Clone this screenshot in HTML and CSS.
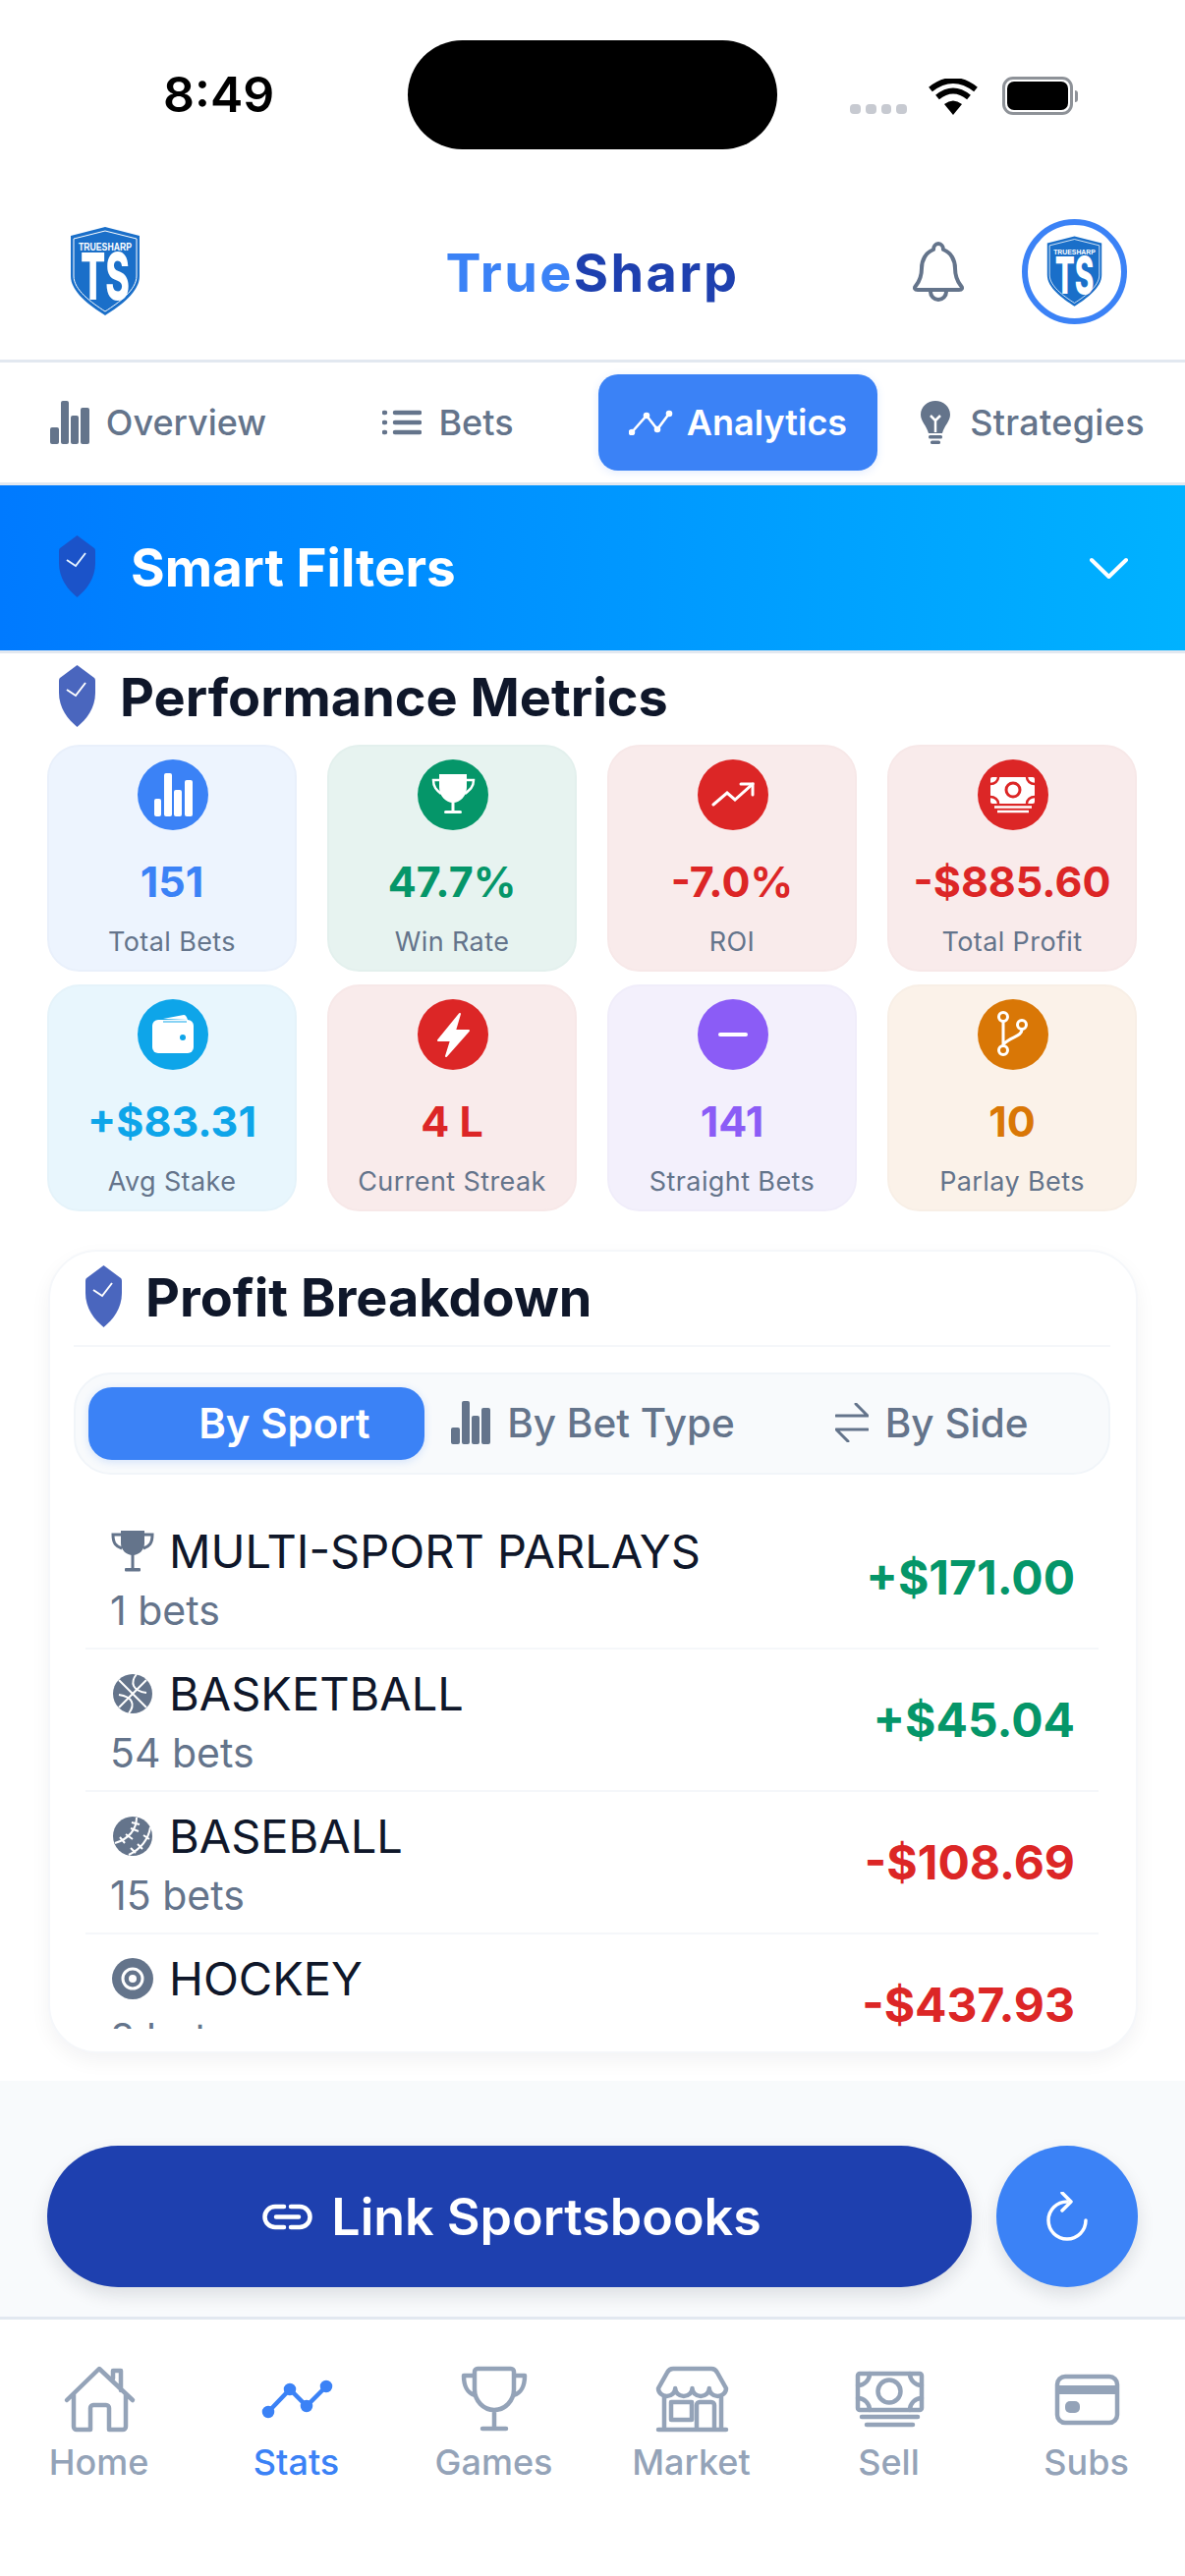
FILE: index.html
```html
<!DOCTYPE html>
<html lang="en">
<head>
<meta charset="utf-8">
<title>TrueSharp Analytics</title>
<link rel="stylesheet" href="styles.css">
</head>
<body>
<svg class="defs" width="0" height="0" aria-hidden="true">
  <symbol id="shield" viewBox="0 0 37 63">
    <path d="M18.5 0 L36 13 C37 14 37 15 37 17 V28 C37 44 28 55 18.5 63 C9 55 0 44 0 28 V17 C0 15 0 14 1 13 Z"/>
    <path d="M8 25 L17 31 L27 18" fill="none" stroke="#fff" stroke-width="2"/>
  </symbol>
  <symbol id="bars" viewBox="0 0 40 44">
    <rect x="0" y="27" width="9" height="17" rx="2"/><rect x="11" y="0" width="8" height="44" rx="2"/><rect x="21" y="15" width="8" height="29" rx="2"/><rect x="31" y="7" width="9" height="37" rx="2"/>
  </symbol>
</svg>

<header class="status">
  <span class="time">8:49</span>
  <div class="island"></div>
  <div class="status-right">
    <div class="signal"><i></i><i></i><i></i><i></i></div>
    <svg class="wifi" width="50" height="37" viewBox="0 0 50 37"><path d="M25 37 L16 26 Q25 19 34 26 Z"/><path d="M9 19 Q25 6 41 19" fill="none" stroke="#000" stroke-width="6"/><path d="M2 11 Q25 -7 48 11" fill="none" stroke="#000" stroke-width="6"/></svg>
    <div class="battery"><div class="battery-fill"></div></div>
  </div>
</header>

<section class="topbar">
  <svg class="logo logo-svg" width="72" height="90" viewBox="0 0 72 90">
    <path d="M36 0 L71 9 V50 C71 66 52 80 36 90 C20 80 1 66 1 50 V9 Z" fill="#1a6fc9"/>
    <path d="M36 4 L68 12 V50 C68 64 50 77 36 86 C22 77 4 64 4 50 V12 Z" fill="none" stroke="#fff" stroke-width="1"/>
    <text x="36" y="24" text-anchor="middle" class="logo-small" textLength="54" lengthAdjust="spacingAndGlyphs">TRUESHARP</text>
    <text x="36" y="74" text-anchor="middle" class="logo-big" textLength="50" lengthAdjust="spacingAndGlyphs">TS</text>
  </svg>
  <div class="brand"><span class="brand-a">True</span><span class="brand-b">Sharp</span></div>
  <div class="top-actions">
    <svg width="54" height="62" viewBox="0 0 54 62" fill="none" stroke="#64748b" stroke-width="4" stroke-linejoin="round"><path d="M27 3 C30 3 32 6 32 9 C40 12 44 20 44 28 C44 36 46 41 50 46 C52 48 51 50 48 50 H6 C3 50 2 48 4 46 C8 41 10 36 10 28 C10 20 14 12 22 9 C22 6 24 3 27 3 Z"/><path d="M19 50 V52 a8 8 0 0 0 16 0 V50"/></svg>
    <div class="avatar">
      <svg class="logo-svg" width="57" height="72" viewBox="0 0 72 90">
        <path d="M36 0 L71 9 V50 C71 66 52 80 36 90 C20 80 1 66 1 50 V9 Z" fill="#1a6fc9"/>
        <path d="M36 4 L68 12 V50 C68 64 50 77 36 86 C22 77 4 64 4 50 V12 Z" fill="none" stroke="#fff" stroke-width="1"/>
        <text x="36" y="24" text-anchor="middle" class="logo-small" textLength="54" lengthAdjust="spacingAndGlyphs">TRUESHARP</text>
        <text x="36" y="74" text-anchor="middle" class="logo-big" textLength="50" lengthAdjust="spacingAndGlyphs">TS</text>
      </svg>
    </div>
  </div>
</section>

<nav class="tabs">
  <div class="tab"><svg class="fill-slate" width="40" height="44"><use href="#bars"/></svg><span>Overview</span></div>
  <div class="tab"><svg width="40" height="26" viewBox="0 0 40 26" fill="none" stroke="#64748b" stroke-width="4.5" stroke-linecap="round"><path d="M13 3 H38 M13 13 H38 M13 23 H38 M2 3 H3 M2 13 H3 M2 23 H3"/></svg><span>Bets</span></div>
  <div class="tab tab-active"><svg width="45" height="26" viewBox="0 0 45 26" fill="#fff" stroke="#fff" stroke-width="2.6"><path d="M3 23 L18 6 L29 20 L41 4" fill="none"/><circle cx="3" cy="23" r="2"/><circle cx="18" cy="6" r="2"/><circle cx="29" cy="20" r="2"/><circle cx="41" cy="4" r="2"/></svg><span>Analytics</span></div>
  <div class="tab tab-last"><svg width="30" height="44" viewBox="0 0 30 44" fill="#64748b"><path d="M15 0 C23 0 30 6 30 14 C30 21 24 25 22 33 H8 C6 25 0 21 0 14 C0 6 7 0 15 0 Z"/><path d="M15 32 V20 L10 15 M15 20 L20 15" fill="none" stroke="#fff" stroke-width="2.5"/><rect x="8" y="35" width="14" height="3.5" rx="1.5"/><rect x="10" y="40.5" width="10" height="3.5" rx="1.5"/></svg><span>Strategies</span></div>
</nav>

<section class="banner">
  <svg class="shield shield-banner" width="37" height="63"><use href="#shield"/></svg>
  <h2 class="banner-title">Smart Filters</h2>
  <svg class="chevron" width="39" height="23" viewBox="0 0 39 23" fill="none" stroke="#fff" stroke-width="4" stroke-linecap="round" stroke-linejoin="round"><path d="M2 3 L19.5 20 L37 3"/></svg>
</section>

<main class="main">
  <div class="section-head">
    <svg class="shield shield-plain" width="37" height="63"><use href="#shield"/></svg>
    <h2 class="heading">Performance Metrics</h2>
  </div>

  <div class="metrics">
    <div class="metric m-blue">
      <div class="metric-icon"><svg width="72" height="72" viewBox="0 0 72 72" fill="#fff"><rect x="17" y="40" width="7" height="18" rx="2"/><rect x="27" y="14" width="8" height="44" rx="2"/><rect x="37" y="31" width="8" height="27" rx="2"/><rect x="48" y="21" width="8" height="37" rx="2"/></svg></div>
      <div class="metric-value">151</div><div class="metric-label">Total Bets</div>
    </div>
    <div class="metric m-green">
      <div class="metric-icon"><svg width="72" height="72" viewBox="0 0 72 72" fill="#fff"><path d="M22 15 H50 V28 a14 16 0 0 1 -28 0 Z"/><path d="M22 21 H16 C16 28 19 31 24 35 M50 21 H57 C57 28 53 31 48 35" fill="none" stroke="#fff" stroke-width="2.5"/><rect x="34.500" y="40" width="3" height="13"/><rect x="27" y="52" width="18" height="3" rx="1.500"/></svg></div>
      <div class="metric-value">47.7%</div><div class="metric-label">Win Rate</div>
    </div>
    <div class="metric m-red">
      <div class="metric-icon"><svg width="72" height="72" viewBox="0 0 72 72" fill="none" stroke="#fff" stroke-width="3" stroke-linecap="round"><path d="M16 46 L30 34 L38 41 L56 25"/><path d="M44 25 H56 V36"/></svg></div>
      <div class="metric-value">-7.0%</div><div class="metric-label">ROI</div>
    </div>
    <div class="metric m-red">
      <div class="metric-icon"><svg width="72" height="72" viewBox="0 0 72 72"><rect x="13" y="18" width="45" height="27" rx="2" fill="#fff"/><circle cx="36" cy="31" r="7" fill="#fff" stroke="#dc2626" stroke-width="3"/><path d="M13 25 a8 7 0 0 0 8 -7 M58 25 a8 7 0 0 1 -8 -7 M13 38 a8 7 0 0 1 8 7 M58 38 a8 7 0 0 0 -8 7" fill="none" stroke="#dc2626" stroke-width="2.500"/><path d="M17 48.500 H55 M20 53 H52" stroke="#fff" stroke-width="2.500"/></svg></div>
      <div class="metric-value">-$885.60</div><div class="metric-label">Total Profit</div>
    </div>
    <div class="metric m-sky">
      <div class="metric-icon"><svg width="72" height="72" viewBox="0 0 72 72" fill="#fff"><rect x="15" y="21" width="42" height="34" rx="6"/><path d="M26 20 L47 16 C49 16 50 18 51 21 Z"/><path d="M26 23 H50" stroke="#0ea5e9" stroke-width="1"/><circle cx="46" cy="39" r="3" fill="#0ea5e9"/></svg></div>
      <div class="metric-value">+$83.31</div><div class="metric-label">Avg Stake</div>
    </div>
    <div class="metric m-red">
      <div class="metric-icon"><svg width="72" height="72" viewBox="0 0 72 72" fill="#fff" stroke="#fff" stroke-width="2" stroke-linejoin="round"><path d="M43 15 L21 42 H34 L29 58 L52 32 H38 Z"/></svg></div>
      <div class="metric-value">4 L</div><div class="metric-label">Current Streak</div>
    </div>
    <div class="metric m-purple">
      <div class="metric-icon"><svg width="72" height="72" viewBox="0 0 72 72"><rect x="21" y="34" width="30" height="4" rx="2" fill="#fff"/></svg></div>
      <div class="metric-value">141</div><div class="metric-label">Straight Bets</div>
    </div>
    <div class="metric m-orange">
      <div class="metric-icon"><svg width="72" height="72" viewBox="0 0 72 72" fill="none" stroke="#fff" stroke-width="3"><circle cx="26" cy="18" r="4.500"/><circle cx="45" cy="26" r="4.500"/><circle cx="26" cy="52" r="4.500"/><path d="M26 23 V47 M45 31 C45 38 34 38 26 46"/></svg></div>
      <div class="metric-value">10</div><div class="metric-label">Parlay Bets</div>
    </div>
  </div>

  <section class="breakdown">
    <div class="section-head breakdown-head">
      <svg class="shield shield-plain" width="37" height="63"><use href="#shield"/></svg>
      <h2 class="heading">Profit Breakdown</h2>
    </div>
    <div class="segments">
      <div class="segment segment-active"><span class="seg-spacer"></span><span>By Sport</span></div>
      <div class="segment segment-mid"><svg class="fill-slate" width="40" height="44"><use href="#bars"/></svg><span>By Bet Type</span></div>
      <div class="segment segment-end"><svg width="34" height="40" viewBox="0 0 34 40" fill="none" stroke="#64748b" stroke-width="3" stroke-linecap="round" stroke-linejoin="round"><path d="M1 13 H33 L21 1 M33 27 H1 L13 39"/></svg><span>By Side</span></div>
    </div>
    <div class="rows">
      <div class="row">
        <div class="row-info">
          <div class="row-title"><svg width="44" height="42" viewBox="0 0 44 42" fill="#64748b"><path d="M10 0 H34 V13 C34 20 28 25 22 25 C16 25 10 20 10 13 Z"/><path d="M10 4 H2 C2 13 5 16 11 18 M34 4 H42 C42 13 39 16 33 18" fill="none" stroke="#64748b" stroke-width="3"/><rect x="20.500" y="24" width="3" height="15"/><rect x="14" y="38" width="16" height="3.500" rx="1"/></svg><span>MULTI-SPORT PARLAYS</span></div>
          <div class="row-count">1 bets</div>
        </div>
        <div class="row-value pos">+$171.00</div>
      </div>
      <div class="row">
        <div class="row-info">
          <div class="row-title"><svg width="44" height="42" viewBox="0 0 44 42"><circle cx="22" cy="21" r="20" fill="#64748b"/><path d="M8 7 L36 35 M36 7 L8 35 M26 1 C19 10 22 18 36 20 M18 41 C25 32 22 24 8 22" fill="none" stroke="#fff" stroke-width="2"/></svg><span>BASKETBALL</span></div>
          <div class="row-count">54 bets</div>
        </div>
        <div class="row-value pos">+$45.04</div>
      </div>
      <div class="row">
        <div class="row-info">
          <div class="row-title"><svg width="44" height="42" viewBox="0 0 44 42"><circle cx="22" cy="21" r="20" fill="#64748b"/><path d="M26 2 C26 14 18 24 4 28 M40 12 C38 24 30 34 18 40 M21 7 L29 9 M20 13 L28 16 M15 19 L22 24 M9 22 L14 28 M33 20 L39 24 M27 29 L32 34 M20 33 L25 38" fill="none" stroke="#fff" stroke-width="2"/></svg><span>BASEBALL</span></div>
          <div class="row-count">15 bets</div>
        </div>
        <div class="row-value neg">-$108.69</div>
      </div>
      <div class="row">
        <div class="row-info">
          <div class="row-title"><svg width="44" height="42" viewBox="0 0 44 42"><circle cx="22" cy="21" r="21" fill="#64748b"/><circle cx="22" cy="21" r="10" fill="none" stroke="#fff" stroke-width="3"/><circle cx="22" cy="21" r="4" fill="#fff"/></svg><span>HOCKEY</span></div>
          <div class="row-count">8 bets</div>
        </div>
        <div class="row-value neg">-$437.93</div>
      </div>
    </div>
  </section>
</main>

<section class="actions">
  <button class="link-btn"><svg width="53" height="27" viewBox="0 0 53 27" fill="none" stroke="#fff" stroke-width="4.500" stroke-linecap="round"><path d="M23 3 H14 a10.500 10.500 0 0 0 0 21 H23 M30 3 H39 a10.500 10.500 0 0 1 0 21 H30 M15 13.500 H38"/></svg><span>Link Sportsbooks</span></button>
  <button class="refresh-btn"><svg width="42" height="50" viewBox="0 0 42 50" fill="none" stroke="#fff" stroke-width="3.500" stroke-linecap="round" stroke-linejoin="round"><path d="M21 10 a19 19 0 1 0 19 19"/><path d="M16 1 L25 10 L16 19"/></svg></button>
</section>

<nav class="bottom">
  <div class="bottom-item">
    <svg width="80" height="72" viewBox="0 0 80 72" class="nav-icon"><path d="M7 36 L40 4 L74 36 M14 30 V63 a3 3 0 0 0 3 3 H31 V44 a3 3 0 0 1 3 -3 H47 a3 3 0 0 1 3 3 V66 H64 a3 3 0 0 0 3 -3 V30 M54 14 V6 H62 V26"/></svg>
    <span>Home</span>
  </div>
  <div class="bottom-item bottom-active">
    <svg width="80" height="72" viewBox="0 0 80 72" fill="#3b82f6" stroke="#3b82f6" stroke-width="4.500"><path d="M11 48 L33 25 L50 42 L70 22" fill="none"/><circle cx="11" cy="48" r="4"/><circle cx="33" cy="25" r="4"/><circle cx="50" cy="42" r="4"/><circle cx="70" cy="22" r="4"/></svg>
    <span>Stats</span>
  </div>
  <div class="bottom-item">
    <svg width="80" height="72" viewBox="0 0 80 72" class="nav-icon"><path d="M23 4 H57 a3 3 0 0 1 3 3 V25 a20 21 0 0 1 -40 0 V7 a3 3 0 0 1 3 -3 Z M20 11 H9 C9 22 12 28 20 31 M60 11 H71 C71 22 68 28 60 31 M40 46 V65 M28 65 H52"/></svg>
    <span>Games</span>
  </div>
  <div class="bottom-item">
    <svg width="80" height="72" viewBox="0 0 80 72" class="nav-icon"><path d="M6 24 L15 8 Q17 4 21 4 H60 Q64 4 66 8 L75 24 a8.600 8 0 0 1 -17.200 0 a8.600 8 0 0 1 -17.300 0 a8.600 8 0 0 1 -17.300 0 a8.600 8 0 0 1 -17.200 0 Z M12 32 V66 M70 32 V66 M6 66 H75 M45 66 V41 a3 3 0 0 1 3 -3 H60 a3 3 0 0 1 3 3 V66 M19 38 H40 V56 H19 Z"/></svg>
    <span>Market</span>
  </div>
  <div class="bottom-item">
    <svg width="80" height="72" viewBox="0 0 80 72" class="nav-icon"><rect x="8" y="9" width="65" height="37" rx="2"/><circle cx="40" cy="27" r="11.500"/><path d="M8 21 a12 12 0 0 0 12 -12 M73 21 a12 12 0 0 1 -12 -12 M8 34 a12 12 0 0 1 12 12 M73 34 a12 12 0 0 0 -12 12 M12 53 H69 M17 61 H64"/></svg>
    <span>Sell</span>
  </div>
  <div class="bottom-item">
    <svg width="80" height="72" viewBox="0 0 80 72"><rect x="10" y="12" width="61" height="47" rx="8" fill="none" stroke="#94a3b8" stroke-width="4.500"/><rect x="8" y="21" width="64" height="9" fill="#94a3b8"/><rect x="18" y="37" width="15" height="12" rx="5" fill="#94a3b8"/></svg>
    <span>Subs</span>
  </div>
</nav>
</body>
</html>
```

FILE: styles.css
```css
* { box-sizing: border-box; }

html, body {
  margin: 0;
  padding: 0;
  width: 1206px;
  height: 2622px;
  overflow: hidden;
  background: #fff;
  font-family: Inter, "Noto Sans", sans-serif;
  color: #0f172a;
}

.defs { display: block; height: 0; }

.logo-svg { overflow: visible; }
.logo-small { font: 700 10px "Liberation Sans", sans-serif; fill: #fff; }
.logo-big { font: 800 66px Inter, sans-serif; fill: #fff; }

.status {
  height: 186px;
  padding: 41px 0 0 166px;
  display: flex;
  align-items: flex-start;
}
.time {
  width: 249px;
  font-size: 50px;
  font-weight: 600;
  line-height: 111px;
  color: #000;
}
.island {
  width: 376px;
  height: 111px;
  border-radius: 56px;
  background: #000;
}
.status-right {
  margin-left: 74px;
  margin-top: 37px;
  height: 39px;
  display: flex;
  align-items: flex-end;
}
.signal { display: flex; gap: 5px; width: 58px; margin-bottom: 1px; }
.signal i { width: 11px; height: 10px; border-radius: 4px; background: #c7cad1; }
.wifi { margin-left: 22px; }
.battery {
  position: relative;
  margin-left: 25px;
  width: 72px;
  height: 39px;
  border: 3px solid #8e9298;
  border-radius: 11px;
  padding: 2px;
}
.battery::after {
  content: "";
  position: absolute;
  right: -8px;
  top: 11px;
  width: 3px;
  height: 12px;
  border-radius: 0 3px 3px 0;
  background: #8e9298;
}
.battery-fill { width: 100%; height: 100%; background: #000; border-radius: 7px; }

.topbar {
  height: 183px;
  padding: 0 59px;
  border-bottom: 3px solid #e2e8f0;
  display: grid;
  grid-template-columns: 1fr auto 1fr;
  align-items: center;
}
.logo { margin-left: 12px; display: block; }
.brand { font-size: 54px; font-weight: 700; letter-spacing: 2.4px; padding-top: 2px; }
.brand-a { color: #3b82f6; }
.brand-b { color: #1e40af; }
.top-actions { display: flex; justify-content: flex-end; align-items: center; gap: 58px; }
.avatar {
  width: 107px;
  height: 107px;
  border: 6px solid #3b82f6;
  border-radius: 50%;
  display: flex;
  align-items: center;
  justify-content: center;
}

.tabs {
  height: 125px;
  padding: 12px 0 12px 19px;
  border-bottom: 3px solid #e2e8f0;
  display: grid;
  grid-template-columns: repeat(4, 284px);
  column-gap: 11px;
}
.tab {
  display: flex;
  align-items: center;
  justify-content: center;
  gap: 17px;
  border-radius: 20px;
  font-size: 36px;
  font-weight: 500;
  color: #64748b;
}
.tab-active { background: #3b82f6; color: #fff; font-weight: 600; gap: 14px; box-shadow: 0 2px 8px rgba(59,130,246,.15); }
.tab-last { gap: 20px; margin-left: 5px; margin-right: -5px; letter-spacing: .3px; }
.fill-slate { fill: #64748b; }

.banner {
  height: 171px;
  padding: 0 58px 0 60px;
  border-bottom: 3px solid #e2e8f0;
  background: linear-gradient(90deg, #007aff, #00b2ff);
  display: flex;
  align-items: center;
}
.shield { flex: none; }
.shield-banner { fill: #1e4fc4; opacity: .9; margin-bottom: 3px; }
.shield-plain { fill: #1e40af; opacity: .8; }
.banner-title { margin: 0 0 0 36px; flex: 1; font-size: 53px; font-weight: 700; color: #fff; }

.main { padding: 0 48px; height: 1453px; }

.section-head {
  height: 93px;
  padding: 12px 0 0 12px;
  display: flex;
  align-items: flex-start;
  gap: 25px;
}
.heading { margin: 0; font-size: 54px; line-height: 66px; font-weight: 700; color: #0f172a; }

.metrics {
  display: grid;
  grid-template-columns: repeat(4, 254px);
  gap: 13px 31px;
}
.metric {
  height: 231px;
  border: 2px solid;
  border-radius: 33px;
  padding-top: 13px;
  display: flex;
  flex-direction: column;
  align-items: center;
}
.metric-icon { width: 72px; height: 72px; margin-left: 2px; border-radius: 50%; background: var(--accent); }
.metric-icon svg { display: block; }
.metric-value { margin-top: 24px; font-size: 43px; line-height: 56px; font-weight: 700; color: var(--accent); }
.metric-label { margin-top: 16px; font-size: 27px; line-height: 36px; color: #64748b; letter-spacing: .4px; }
.m-blue { --accent: #3b82f6; background: #edf4fe; border-color: #e9f0fb; }
.m-green { --accent: #059669; background: #e7f3f0; border-color: #e3f0ed; }
.m-red { --accent: #dc2626; background: #f9ebeb; border-color: #f7e8e8; }
.m-sky { --accent: #0ea5e9; background: #e8f6fd; border-color: #e5f3fa; }
.m-purple { --accent: #8b5cf6; background: #f3f0fc; border-color: #f0edfa; }
.m-orange { --accent: #d97706; background: #fbf2e9; border-color: #f8efe6; }

.breakdown {
  margin: 39px 0 0 1px;
  height: 818px;
  border: 2px solid #f5f7fa;
  border-radius: 50px;
  padding: 0 26px 0 24px;
  background: #fff;
  box-shadow: 0 8px 20px rgba(15,23,42,.05);
}
.breakdown-head {
  height: 97px;
  padding: 14px 0 0 12px;
  gap: 24px;
  border-bottom: 2px solid #f5f7fa;
}

.segments {
  margin-top: 26px;
  height: 104px;
  padding: 13px;
  border: 2px solid #f1f5f9;
  border-radius: 38px;
  background: #f8fafc;
  display: grid;
  grid-template-columns: repeat(3, 1fr);
}
.segment {
  display: flex;
  align-items: center;
  justify-content: center;
  gap: 17px;
  padding-bottom: 2px;
  border-radius: 24px;
  font-size: 40.5px;
  font-weight: 500;
  color: #64748b;
}
.segment-active { background: #3b82f6; color: #fff; font-size: 42px; font-weight: 600; box-shadow: 0 2px 8px rgba(59,130,246,.2); }
.segment-mid { padding-left: 2px; }
.segment-end { padding-left: 8px; }
.seg-spacer { width: 40px; }

.rows {
  margin: 33px 12px 0;
  height: 531px;
  overflow: hidden;
}
.row {
  height: 145px;
  padding: 18px 24px 0 25px;
  border-bottom: 2px solid #f5f7fa;
  display: flex;
  justify-content: space-between;
}
.row-title { display: flex; align-items: center; gap: 15px; height: 53px; font-size: 47px; font-weight: 400; color: #0f172a; }
.row-title svg { margin-left: 1px; }
.row-count { margin-top: 8px; font-size: 41px; line-height: 52px; color: #64748b; }
.row-value { padding-top: 26px; font-size: 48px; line-height: 56px; font-weight: 700; }
.pos { color: #059669; }
.neg { color: #dc2626; }

.actions {
  height: 243px;
  margin-top: 0;
  padding: 66px 48px 0;
  border-bottom: 3px solid #e2e8f0;
  background: #f8fafc;
  display: flex;
  gap: 25px;
  align-items: flex-start;
}
.link-btn, .refresh-btn {
  border: 0;
  height: 144px;
  border-radius: 72px;
  display: flex;
  align-items: center;
  justify-content: center;
  color: #fff;
  font-family: inherit;
  box-shadow: 0 8px 18px rgba(15,23,42,.12);
}
.link-btn { flex: 1; gap: 18px; padding-left: 10px; background: #1e40af; font-size: 52px; font-weight: 600; }
.refresh-btn { width: 144px; flex: none; background: #3b82f6; }

.bottom {
  height: 261px;
  padding-top: 46px;
  display: grid;
  grid-template-columns: repeat(6, 1fr);
  align-items: start;
  background: #fff;
}
.bottom-item {
  display: flex;
  flex-direction: column;
  align-items: center;
  gap: 5px;
  font-size: 36px;
  line-height: 44px;
  font-weight: 500;
  color: #94a3b8;
}
.bottom-active { color: #3b82f6; }
.nav-icon { fill: none; stroke: #94a3b8; stroke-width: 4.5; stroke-linecap: round; stroke-linejoin: round; }
```
